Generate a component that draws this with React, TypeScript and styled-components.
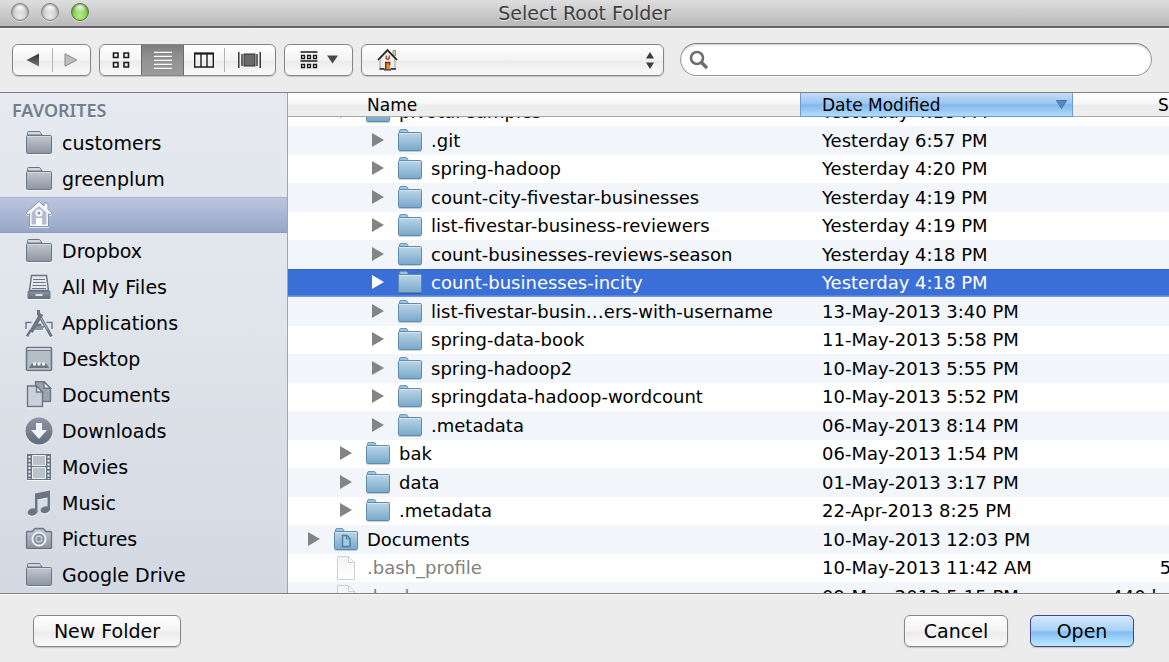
import React, { useLayoutEffect, useRef, useState } from "react";
import styled, { createGlobalStyle, css } from "styled-components";

const GlobalStyle = createGlobalStyle`
  *, *::before, *::after { box-sizing: border-box; }
  body { margin: 0; }
  button, input, select { font: inherit; color: inherit; margin: 0; }
`;

const Dialog = styled.main`
  display: flex;
  flex-direction: column;
  height: 100vh;
  overflow: hidden;
  background: #ececec;
  color: #000;
  font-family: "Lucida Grande", "DejaVu Sans", sans-serif;
  font-size: 19px;
  line-height: 24px;
`;

/* ---------- title bar ---------- */

const TitleBar = styled.header`
  display: grid;
  grid-template-columns: 1fr auto 1fr;
  align-items: start;
  flex: none;
  height: 28px;
  padding: 0 11px;
  border-bottom: 2px solid #666;
  background: linear-gradient(#dedede, #b9b9b9);
`;

const Lights = styled.div`
  display: flex;
  gap: 12px;
  padding-top: 3px;
`;

const Light = styled.button<{ $active?: boolean }>`
  width: 18px;
  height: 18px;
  padding: 0;
  border: 1px solid ${(p) => (p.$active ? "#4c7a38" : "#808080")};
  border-radius: 50%;
  background: ${(p) =>
    p.$active
      ? "radial-gradient(circle at 50% 14%, #ffffff 0, #b9e69a 26%, transparent 50%), radial-gradient(circle at 50% 75%, #b6f27e, #6cb548 80%)"
      : "radial-gradient(circle at 50% 14%, #ffffff 0, #e6e6e6 26%, transparent 50%), radial-gradient(circle at 50% 75%, #ececec, #b2b2b2 85%)"};
  box-shadow: 0 1px 0 rgba(255, 255, 255, 0.6), inset 0 1px 2px rgba(0, 0, 0, 0.35);
`;

const Title = styled.h1`
  margin: 0;
  color: #404040;
  font-size: 19px;
  font-weight: 400;
  line-height: 26px;
  text-shadow: 0 1px 0 rgba(255, 255, 255, 0.6);
`;

/* ---------- toolbar ---------- */

const Toolbar = styled.div`
  display: flex;
  align-items: center;
  gap: 8px;
  flex: none;
  height: 65px;
  padding: 0 17px 2px 12px;
  border-top: 1px solid #f8f8f8;
  border-bottom: 1px solid #808080;
`;

const raised = css`
  border: 1px solid #868686;
  border-radius: 6px;
  background: linear-gradient(#ffffff, #f3f3f3 50%, #ececec 55%, #fafafa);
  box-shadow: 0 1px 1px rgba(0, 0, 0, 0.18);
`;

const Group = styled.div`
  ${raised}
  display: flex;
  height: 32px;
  overflow: hidden;
`;

const Segment = styled.button<{ $width: number; $divided?: boolean; $on?: boolean }>`
  display: flex;
  align-items: center;
  justify-content: center;
  gap: 9px;
  width: ${(p) => p.$width}px;
  height: 30px;
  padding: 0;
  border: 0;
  background: ${(p) =>
    p.$on
      ? "linear-gradient(#7d7d7d, #8f8f8f 40%, #9c9c9c)"
      : p.$divided
        ? "linear-gradient(#b4b4b4, #b4b4b4) 0 50% / 1px 24px no-repeat"
        : "transparent"};
  box-shadow: ${(p) => (p.$on ? "inset 1px 0 0 #6a6a6a, inset -1px 0 0 #6a6a6a" : "none")};
`;

const PathField = styled.label`
  position: relative;
  display: flex;
  flex: none;
  width: 303px;
`;

const PathSelect = styled.select`
  ${raised}
  width: 100%;
  height: 32px;
  padding: 0 30px 0 44px;
  appearance: none;
`;

const PathIcon = styled.svg`
  position: absolute;
  top: 4px;
  left: 15px;
  pointer-events: none;
`;

const PathArrows = styled.svg`
  position: absolute;
  top: 7px;
  right: 9px;
  pointer-events: none;
`;

const SearchField = styled.label`
  display: flex;
  align-items: center;
  flex: 1;
  height: 33px;
  margin-left: 8px;
  padding: 0 12px 0 8px;
  border: 1px solid #999;
  border-top-color: #808080;
  border-radius: 17px;
  background: #fff;
  box-shadow: inset 0 1px 2px rgba(0, 0, 0, 0.2), 0 1px 0 rgba(255, 255, 255, 0.7);
`;

const SearchInput = styled.input`
  flex: 1;
  min-width: 0;
  margin-left: 8px;
  padding: 0;
  border: 0;
  outline: 0;
  background: transparent;
`;

/* ---------- sidebar ---------- */

const Content = styled.div`
  display: flex;
  flex: 1;
  min-height: 0;
`;

const Sidebar = styled.nav`
  flex: none;
  width: 288px;
  overflow: hidden;
  border-right: 1px solid #a5a5a5;
  background: linear-gradient(#e6eaf0, #e0e4eb 45%, #d3d9e2);
`;

const SidebarTitle = styled.h2`
  margin: 0;
  padding: 5px 12px 3px;
  color: #717e8e;
  font-family: "Noto Sans", sans-serif;
  font-size: 18px;
  font-weight: 600;
  line-height: 24px;
  text-shadow: 0 1px 0 rgba(255, 255, 255, 0.7);
`;

const Places = styled.ul`
  margin: 0;
  padding: 0;
  list-style: none;
`;

const Place = styled.a<{ $selected?: boolean }>`
  display: flex;
  align-items: center;
  gap: 9px;
  height: 36px;
  padding-left: 25px;
  color: #000;
  text-decoration: none;
  ${(p) =>
    p.$selected &&
    css`
      border-top: 1px solid #a9b3cd;
      border-bottom: 1px solid #8f9dbe;
      background: linear-gradient(#bcc5df, #98a6c6);
    `}
`;

const PlaceIcon = styled.svg`
  flex: none;
  filter: drop-shadow(0 1px 0 rgba(255, 255, 255, 0.7));
`;

/* ---------- file list ---------- */

const ListPane = styled.section`
  flex: 1;
  min-width: 0;
  overflow-x: hidden;
  overflow-y: auto;
  scrollbar-width: none;
  background: #fff;
`;

const FileTable = styled.table`
  width: calc(100% + 40px);
  border-spacing: 0;
  table-layout: fixed;
  font-size: 18px;
  white-space: nowrap;
`;

const NameCol = styled.col``;
const DateCol = styled.col`
  width: 273px;
`;
const SizeCol = styled.col`
  width: 136px;
`;

const HeadCell = styled.th<{ $sorted?: boolean; $right?: boolean; $pad?: number }>`
  position: sticky;
  top: 0;
  z-index: 1;
  height: 24px;
  padding: 0 ${(p) => (p.$right ? 16 : 5)}px 0 ${(p) => p.$pad ?? 0}px;
  border-bottom: 1px solid #a8a8a8;
  background: linear-gradient(#ffffff, #f6f6f6 48%, #ebebeb 52%, #efefef);
  font-size: 17px;
  font-weight: 400;
  line-height: 22px;
  text-align: ${(p) => (p.$right ? "right" : "left")};
  ${(p) =>
    p.$sorted &&
    css`
      border: 1px solid #6d9ad2;
      border-top: 0;
      background: linear-gradient(#c3dcf5, #9cc6f1 45%, #83b7ee 52%, #b2dcfa);
    `}
`;

const SortButton = styled.button`
  display: flex;
  align-items: center;
  justify-content: space-between;
  width: 100%;
  height: 22px;
  padding: 0;
  border: 0;
  background: none;
  line-height: 22px;
`;

const Row = styled.tr<{ $selected?: boolean }>`
  height: 28px;
  &:nth-child(even) {
    height: 29px;
    background: #f2f6fb;
  }
  &:nth-child(n) {
    ${(p) =>
      p.$selected &&
      css`
        color: #fff;
        background: linear-gradient(#3566cb, #3b6fd8 2px, #3b6fd8 26px, #6f97e6 27px);
      `}
  }
`;

const Cell = styled.td<{ $right?: boolean }>`
  padding: 0 ${(p) => (p.$right ? 8 : 0)}px 0 ${(p) => (p.$right ? 0 : 22)}px;
  line-height: 28px;
  text-align: ${(p) => (p.$right ? "right" : "left")};
`;

const NameCell = styled.td<{ $depth: number }>`
  padding: 0 0 0 ${(p) => 20 + p.$depth * 32}px;
`;

const FileName = styled.div<{ $dim?: boolean }>`
  display: flex;
  align-items: center;
  height: 28px;
  color: ${(p) => (p.$dim ? "#808080" : "inherit")};
`;

const Disclosure = styled.button`
  display: flex;
  width: 12px;
  height: 28px;
  margin-right: 14px;
  padding: 6px 0 0;
  border: 0;
  background: none;
`;

const NoDisclosure = styled.span`
  width: 26px;
`;

const FileIcon = styled.svg`
  flex: none;
  margin-right: 9px;
`;

/* ---------- footer ---------- */

const Footer = styled.footer`
  display: flex;
  gap: 22px;
  flex: none;
  padding: 21px 35px 15px 33px;
  border-top: 1px solid #808080;
  box-shadow: inset 0 1px 0 #f8f8f8;
`;

const PushButton = styled.button<{ $default?: boolean; $wide?: boolean }>`
  ${raised}
  width: ${(p) => (p.$wide ? 148 : 104)}px;
  height: 32px;
  padding: 0;
  line-height: 28px;
  ${(p) =>
    p.$default &&
    css`
      border-color: #40468c;
      background: linear-gradient(#d6e9fb, #a9d1f7 48%, #83bdf4 54%, #bdeafd);
    `}
`;

const Spacer = styled.span`
  flex: 1;
`;

/* ---------- drawings ---------- */

const Gradients = styled.svg`
  display: block;
  flex: none;
`;

const Defs = () => (
  <Gradients width="0" height="0" aria-hidden="true">
    <defs>
      <linearGradient id="slate" x1="0" y1="0" x2="0" y2="1">
        <stop offset="0" stopColor="#c2c8d0" />
        <stop offset="1" stopColor="#8b95a2" />
      </linearGradient>
      <linearGradient id="slateDark" x1="0" y1="0" x2="0" y2="1">
        <stop offset="0" stopColor="#8c96a4" />
        <stop offset="1" stopColor="#616c7b" />
      </linearGradient>
      <linearGradient id="blue" x1="0" y1="0" x2="0" y2="1">
        <stop offset="0" stopColor="#bcd6e8" />
        <stop offset="1" stopColor="#78a8c9" />
      </linearGradient>
      <linearGradient id="paper" x1="0" y1="0" x2="0" y2="1">
        <stop offset="0" stopColor="#f3f3f3" />
        <stop offset="1" stopColor="#ffffff" />
      </linearGradient>
      <linearGradient id="arrow" x1="0" y1="0" x2="0" y2="1">
        <stop offset="0" stopColor="#333" />
        <stop offset="1" stopColor="#777" />
      </linearGradient>
    </defs>
  </Gradients>
);

const S = "#6b7685";

const placeShapes: Record<string, React.ReactNode> = {
  folder: (
    <g stroke={S}>
      <path d="M2.5 6V3.5Q2.5 2.500 3.500 2.500H14Q15 2.500 15.500 3.500L17 6Z" fill="#d3d8df" />
      <rect x="1.500" y="6.500" width="25" height="18" rx="1" fill="url(#slate)" />
      <path d="M2.500 7.500H25.500" stroke="#d5dae0" />
    </g>
  ),
  home: (
    <g>
      <path
        d="M14 .5L1 12L3 14L4.500 12.800V25.500H23.500V12.800L25 14L27 12L23 8.500V2H19V5Z"
        fill="#f6f8fc"
        stroke="#8793b0"
      />
      <path d="M14 5L6.500 11.500V23.500H11V17.500H17V23.500H21.500V11.500Z" fill="#b4bdd4" />
      <circle cx="14" cy="12" r="3.500" fill="#fff" />
      <circle cx="14" cy="12" r="1.500" fill="#8190b4" />
      <rect x="11" y="17" width="6" height="8" fill="#fff" />
    </g>
  ),
  allFiles: (
    <g stroke={S}>
      <path d="M6.500 2.500H21.500L23.500 17.500H4.500Z" fill="#e6e9ee" strokeWidth="1.500" />
      <path d="M8 6.500H20M8 9.500H20.500M7.500 12.500H21M7 15.500H21" strokeWidth="1.200" />
      <path d="M3 18.500H25V25.500H3Z" fill="url(#slateDark)" />
      <path d="M10.500 21H17.500V23H10.500Z" fill="#dfe3e9" stroke="none" />
    </g>
  ),
  applications: (
    <g fill="none" stroke={S}>
      <path d="M1 20V13.500H6.500M27 20V13.500H21.500M10 20H18M9 18H19" strokeWidth="1.500" />
      <path d="M12 16H16.500" strokeWidth="2.500" />
      <path d="M16.500 5L6 23" strokeWidth="4" />
      <path d="M5.500 21.500L2 27.500" strokeWidth="2.500" />
      <path d="M13.500 1V5L24.500 24M24 23.500L26.500 27.500" strokeWidth="3" />
      <path d="M16 9L22.500 20.500" stroke="#b4bcc7" />
    </g>
  ),
  desktop: (
    <g stroke={S}>
      <rect x="1.500" y="2.500" width="25" height="23" rx="1" fill="#b5bdc7" strokeWidth="1.600" />
      <path d="M2.500 4H25.500" stroke="#eef0f3" strokeWidth="1.200" />
      <path d="M2 5.500H26" />
      <path d="M4.500 22.500L7 19H21L23.500 22.500Z" fill={S} />
      <path d="M8 17.500H11V20.500H8ZM12.500 17.500H15.500V20.500H12.500ZM17 17.500H20V20.500H17Z" fill="#eef0f4" stroke="none" />
    </g>
  ),
  documents: (
    <g stroke={S} strokeWidth="1.400">
      <path d="M10.500 .8H19L25.500 7.300V20.500H10.500Z" fill="#9aa3b0" />
      <path d="M19 .8V7.300H25.500Z" fill="#e8ebef" />
      <path d="M2.500 5H11.500L17.500 11V25.500H2.500Z" fill="#ccd1d9" />
      <path d="M11.500 5V11H17.500Z" fill="#f0f2f5" />
    </g>
  ),
  downloads: (
    <g>
      <circle cx="14" cy="14" r="13.500" fill="url(#slateDark)" />
      <path d="M11 6H17V13H22L14 22L6 13H11Z" fill="#f0f2f5" />
    </g>
  ),
  movies: (
    <g>
      <rect x="2" y="1" width="24" height="26" fill={S} />
      <path d="M7.500 2.500H20.500V12.500H7.500ZM7.500 14.500H20.500V25.500H7.500Z" fill="#bac1cb" stroke="#edf0f3" />
      <path d="M4.500 3V26M23.500 3V26" stroke="#edf0f3" strokeWidth="2" strokeDasharray="2 1.700" />
    </g>
  ),
  music: (
    <g fill={S}>
      <path d="M10 4.500L25 1.500V21H22.500V8.500L12.500 10.500V23.500H10Z" />
      <ellipse cx="7.500" cy="23" rx="5" ry="3.500" transform="rotate(-15 7.500 23)" />
      <ellipse cx="20.300" cy="20.800" rx="4.800" ry="3.400" transform="rotate(-15 20.300 20.800)" />
    </g>
  ),
  pictures: (
    <g stroke={S} strokeWidth="1.400">
      <path
        d="M2.500 6.500H7L10 3.500H18L21 6.500H25.500Q26.500 6.500 26.500 7.500V22.500Q26.500 23.500 25.500 23.500H2.500Q1.500 23.500 1.500 22.500V7.500Q1.500 6.500 2.500 6.500Z"
        fill="url(#slate)"
      />
      <circle cx="14" cy="14" r="6.500" fill="#7f8997" stroke="#edf0f3" strokeWidth="2" />
      <circle cx="14" cy="14" r="3" fill="#8d97a5" stroke="#c9cfd7" />
    </g>
  ),
};

const Folder = ({ doc }: { doc?: boolean }) => (
  <FileIcon width="24" height="24" viewBox="0 0 24 24" aria-hidden="true">
    <path d="M1 22.500H23" stroke="#000" strokeOpacity=".18" />
    <path d="M1.500 4V2Q1.500 .5 3 .5H8Q9 .5 9.500 1.500L10.500 4Z" fill="#9fc3dc" stroke="#6d98b8" />
    <rect x=".5" y="3.500" width="23" height="18" rx="1" fill="url(#blue)" stroke="#5f8cae" />
    <path d="M1.500 4.500H22.500" stroke="#d5e6f1" />
    {doc && (
      <g stroke="#4c7ea3" fill="#a6c9e0">
        <path d="M8.500 7.500H13L16 10.500V18.500H8.500Z" strokeWidth="1.400" />
        <path d="M12.500 7.500V11H16" fill="none" />
      </g>
    )}
  </FileIcon>
);

const Page = () => (
  <FileIcon width="24" height="24" viewBox="0 0 24 24" aria-hidden="true">
    <path d="M3.500 .5H14.500L20.500 6.500V23.500H3.500Z" fill="url(#paper)" stroke="#cfcfcf" />
    <path d="M14.500 .5V6.500H20.500Z" fill="#fff" stroke="#cfcfcf" />
  </FileIcon>
);

/* ---------- data ---------- */

const places = [
  { label: "customers", icon: "folder" },
  { label: "greenplum", icon: "folder" },
  { label: "", icon: "home", selected: true },
  { label: "Dropbox", icon: "folder" },
  { label: "All My Files", icon: "allFiles" },
  { label: "Applications", icon: "applications" },
  { label: "Desktop", icon: "desktop" },
  { label: "Documents", icon: "documents" },
  { label: "Downloads", icon: "downloads" },
  { label: "Movies", icon: "movies" },
  { label: "Music", icon: "music" },
  { label: "Pictures", icon: "pictures" },
  { label: "Google Drive", icon: "folder" },
];

type Entry = { name: string; date: string; depth: number; kind?: "file" | "docs"; size?: string };

const entries: Entry[] = [
  { name: "pivotal-samples", date: "Yesterday 4:18 PM", depth: 1 },
  { name: ".git", date: "Yesterday 6:57 PM", depth: 2 },
  { name: "spring-hadoop", date: "Yesterday 4:20 PM", depth: 2 },
  { name: "count-city-fivestar-businesses", date: "Yesterday 4:19 PM", depth: 2 },
  { name: "list-fivestar-business-reviewers", date: "Yesterday 4:19 PM", depth: 2 },
  { name: "count-businesses-reviews-season", date: "Yesterday 4:18 PM", depth: 2 },
  { name: "count-businesses-incity", date: "Yesterday 4:18 PM", depth: 2 },
  { name: "list-fivestar-busin…ers-with-username", date: "13-May-2013 3:40 PM", depth: 2 },
  { name: "spring-data-book", date: "11-May-2013 5:58 PM", depth: 2 },
  { name: "spring-hadoop2", date: "10-May-2013 5:55 PM", depth: 2 },
  { name: "springdata-hadoop-wordcount", date: "10-May-2013 5:52 PM", depth: 2 },
  { name: ".metadata", date: "06-May-2013 8:14 PM", depth: 2 },
  { name: "bak", date: "06-May-2013 1:54 PM", depth: 1 },
  { name: "data", date: "01-May-2013 3:17 PM", depth: 1 },
  { name: ".metadata", date: "22-Apr-2013 8:25 PM", depth: 1 },
  { name: "Documents", date: "10-May-2013 12:03 PM", depth: 0, kind: "docs" },
  { name: ".bash_profile", date: "10-May-2013 11:42 AM", depth: 0, kind: "file", size: "5 KB" },
  { name: ".bashrc", date: "09-May-2013 5:15 PM", depth: 0, kind: "file", size: "440 bytes" },
];

export default function App() {
  const pane = useRef<HTMLElement>(null);
  const [selected, setSelected] = useState(6);

  useLayoutEffect(() => {
    if (pane.current) pane.current.scrollTop = 19;
  }, []);

  return (
    <Dialog>
      <GlobalStyle />
      <Defs />
      <TitleBar>
        <Lights>
          <Light aria-label="Close" />
          <Light aria-label="Minimize" />
          <Light $active aria-label="Zoom" />
        </Lights>
        <Title>Select Root Folder</Title>
      </TitleBar>

      <Toolbar>
        <Group>
          <Segment $width={39} aria-label="Back">
            <svg width="14" height="14" viewBox="0 0 14 14">
              <path d="M13 .5V13.500L.5 7Z" fill="url(#arrow)" />
            </svg>
          </Segment>
          <Segment $width={38} $divided aria-label="Forward">
            <svg width="14" height="14" viewBox="0 0 14 14">
              <path d="M1 .8V13.200L12.800 7Z" fill="#bdbdbd" stroke="#8a8a8a" />
            </svg>
          </Segment>
        </Group>
        <Group>
          <Segment $width={41} aria-label="Icon view">
            <svg width="18" height="18" viewBox="0 0 18 18" fill="none" stroke="#1c1c1c" strokeWidth="1.600">
              <path d="M1.500 2H6V6.500H1.500ZM12 2H16.500V6.500H12ZM1.500 11.500H6V16H1.500ZM12 11.500H16.500V16H12Z" />
            </svg>
          </Segment>
          <Segment $width={43} $on aria-label="List view" aria-pressed="true">
            <svg width="18" height="20" viewBox="0 0 18 20">
              <path d="M0 3.500H18M0 7.500H18M0 11.500H18M0 15.500H18M0 19.500H18" stroke="#444" strokeOpacity=".5" />
              <path d="M0 2.500H18M0 6.500H18M0 10.500H18M0 14.500H18M0 18.500H18" stroke="#fff" strokeWidth="1.400" />
            </svg>
          </Segment>
          <Segment $width={40} aria-label="Column view">
            <svg width="20" height="16" viewBox="0 0 20 16" fill="none" stroke="#1c1c1c" strokeWidth="1.400">
              <path d="M.7 1.500H19.300V15H.7ZM7 2V15M13 2V15" />
              <path d="M0 1.500H20" strokeWidth="2" />
            </svg>
          </Segment>
          <Segment $width={51} $divided aria-label="Cover Flow view">
            <svg width="23" height="16" viewBox="0 0 23 16">
              <rect x="6" y="2" width="11" height="12" fill="#6a6a6a" stroke="#333" />
              <path d="M.8 0V16M4 2V14M19 2V14M22.200 0V16" stroke="#1c1c1c" strokeWidth="1.300" />
            </svg>
          </Segment>
        </Group>
        <Group>
          <Segment $width={67} aria-label="Arrange items">
            <svg width="18" height="18" viewBox="0 0 18 18" fill="none" stroke="#1c1c1c" strokeWidth="1.300">
              <path d="M.5 1H17.500M.5 10H17.500" />
              <path d="M1.500 4.500H4.500V7.500H1.500ZM7.500 4.500H10.500V7.500H7.500ZM13.500 4.500H16.500V7.500H13.500ZM1.500 13.500H4.500V16.500H1.500ZM7.500 13.500H10.500V16.500H7.500ZM13.500 13.500H16.500V16.500H13.500Z" />
            </svg>
            <svg width="11" height="9" viewBox="0 0 11 9">
              <path d="M0 .5H11L5.500 8.500Z" fill="#484848" />
            </svg>
          </Segment>
        </Group>
        <PathField>
          <PathSelect aria-label="Current folder">
            <option></option>
          </PathSelect>
          <PathIcon width="22" height="23" viewBox="0 0 22 23" aria-hidden="true">
            <path d="M17 2.500H19.500V8H17Z" fill="#d9cdb4" stroke="#8a7a60" strokeWidth=".8" />
            <path d="M4 11L11.500 3.500L19 11V20.500H4Z" fill="#f1eee6" stroke="#8c8880" strokeWidth=".8" />
            <path d="M2 12L11.500 2L21 12" fill="none" stroke="#222" strokeWidth="1.700" />
            <path d="M3.500 21H8M15 21H20M8 21.800H15" stroke="#222" strokeWidth="1.300" />
            <path d="M10.200 7.500V10.500Q11.700 12 13.200 10.500V7.500" fill="#f8e4dc" stroke="#9a2a28" strokeWidth="1.200" />
            <path d="M9.500 20.500V14.500H14V20.500Z" fill="#e88a18" />
            <path d="M9.700 21V14.500H13.700V17" fill="none" stroke="#8a1a20" strokeWidth="1.300" />
          </PathIcon>
          <PathArrows width="10" height="19" viewBox="0 0 10 19" aria-hidden="true">
            <path d="M5 1L9 7.500H1ZM5 18L9 11.500H1Z" fill="#3c3c3c" />
          </PathArrows>
        </PathField>
        <SearchField>
          <svg width="20" height="20" viewBox="0 0 20 20" fill="none" stroke="#6e6e6e" aria-hidden="true">
            <circle cx="8" cy="8" r="6" strokeWidth="2.600" />
            <path d="M12.500 12.500L18 18" strokeWidth="3.400" />
          </svg>
          <SearchInput type="text" aria-label="Search" />
        </SearchField>
      </Toolbar>

      <Content>
        <Sidebar>
          <SidebarTitle>FAVORITES</SidebarTitle>
          <Places>
            {places.map((p) => (
              <li key={p.icon + p.label}>
                <Place href="#" $selected={p.selected} aria-label={p.label || "Home"}>
                  <PlaceIcon width="28" height="28" viewBox="0 0 28 28" aria-hidden="true">
                    {placeShapes[p.icon]}
                  </PlaceIcon>
                  {p.label}
                </Place>
              </li>
            ))}
          </Places>
        </Sidebar>

        <ListPane ref={pane}>
          <FileTable>
            <colgroup>
              <NameCol />
              <DateCol />
              <SizeCol />
            </colgroup>
            <thead>
              <tr>
                <HeadCell $pad={79}>
                  <SortButton>Name</SortButton>
                </HeadCell>
                <HeadCell $pad={21} $sorted aria-sort="descending">
                  <SortButton>
                    Date Modified
                    <svg width="11" height="9" viewBox="0 0 11 9" aria-hidden="true">
                      <path d="M.5 .5H10.500L5.500 8.500Z" fill="#5b86be" stroke="#4672ad" />
                    </svg>
                  </SortButton>
                </HeadCell>
                <HeadCell $right>Size</HeadCell>
              </tr>
            </thead>
            <tbody>
              {entries.map((e, i) => (
                <Row key={i} $selected={i === selected} onClick={() => setSelected(i)}>
                  <NameCell $depth={e.depth}>
                    <FileName $dim={e.kind === "file"}>
                      {e.kind === "file" ? (
                        <NoDisclosure />
                      ) : (
                        <Disclosure aria-label={`Expand ${e.name}`}>
                          <svg width="12" height="14" viewBox="0 0 12 14">
                            <path d="M0 0V14L12 7Z" fill={i === selected ? "#fff" : "#848484"} />
                          </svg>
                        </Disclosure>
                      )}
                      {e.kind === "file" ? <Page /> : <Folder doc={e.kind === "docs"} />}
                      {e.name}
                    </FileName>
                  </NameCell>
                  <Cell>{e.date}</Cell>
                  <Cell $right>{e.size}</Cell>
                </Row>
              ))}
            </tbody>
          </FileTable>
        </ListPane>
      </Content>

      <Footer>
        <PushButton $wide>New Folder</PushButton>
        <Spacer />
        <PushButton>Cancel</PushButton>
        <PushButton $default>Open</PushButton>
      </Footer>
    </Dialog>
  );
}
